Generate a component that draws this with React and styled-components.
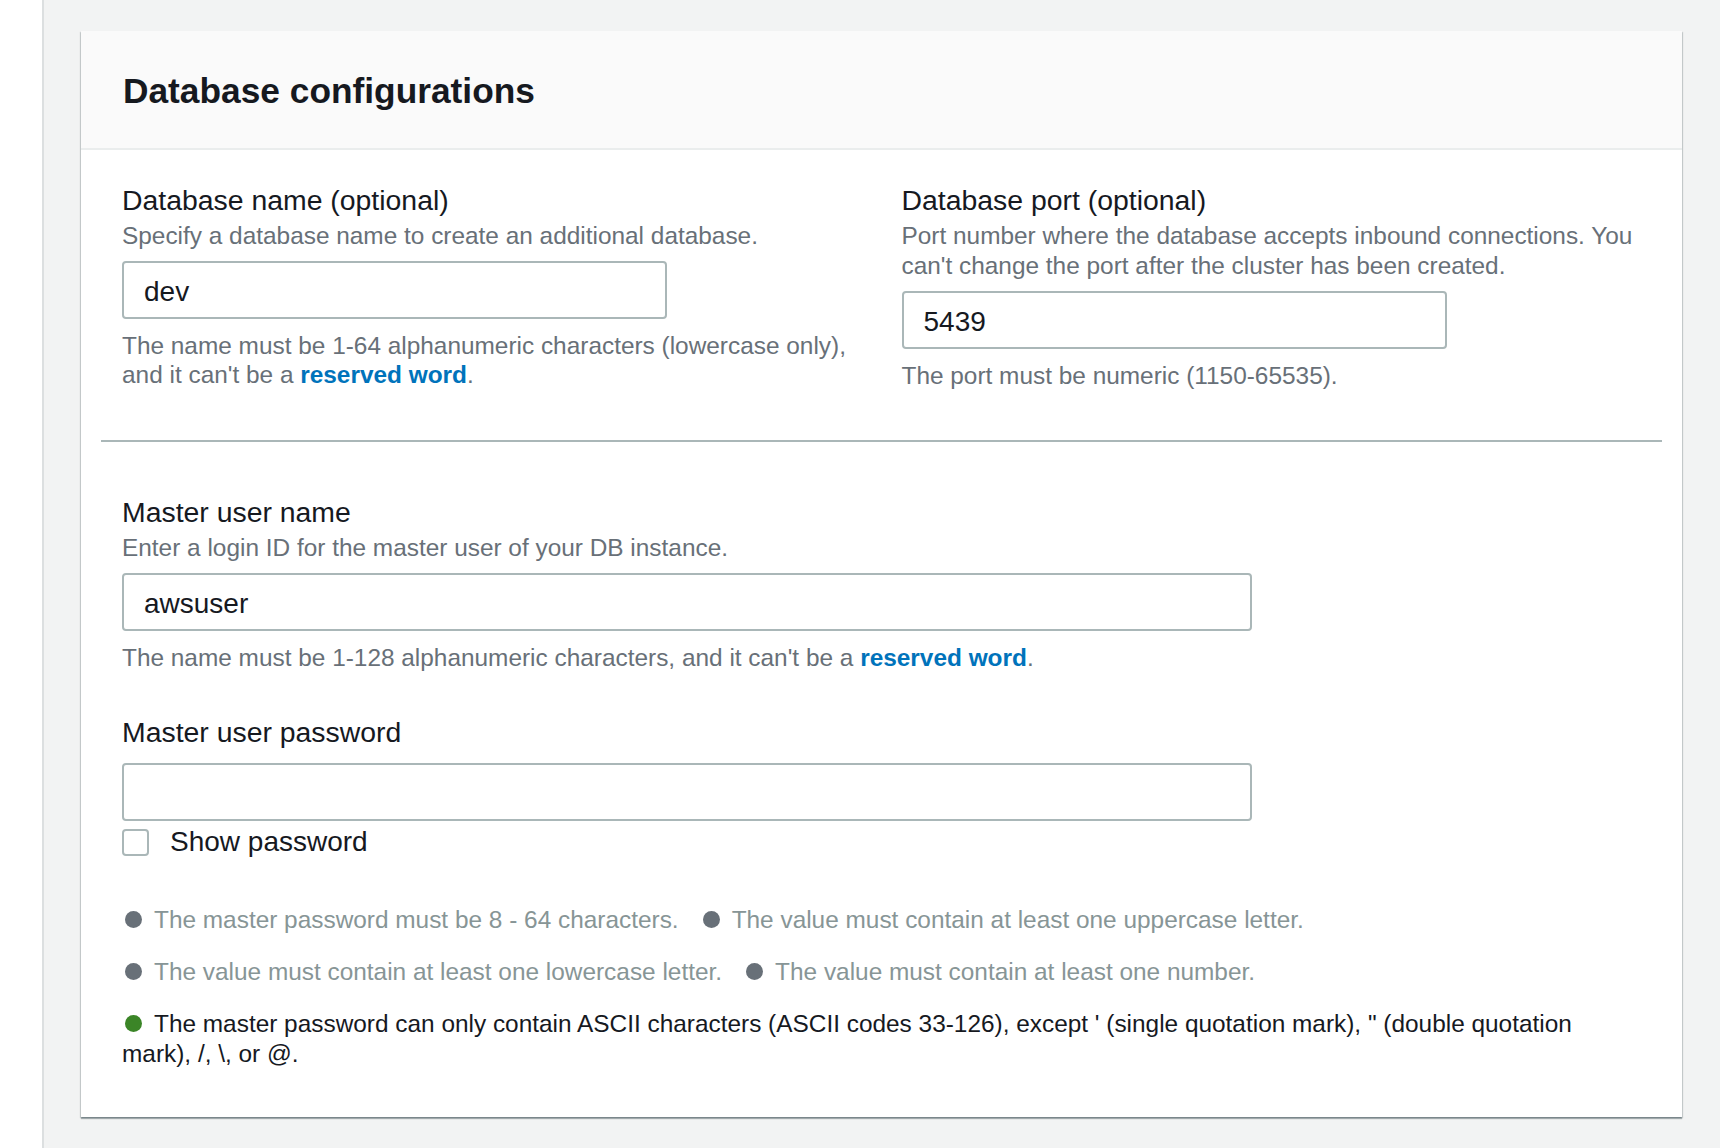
import React from "react";
import styled, { createGlobalStyle } from "styled-components";

const GlobalStyle = createGlobalStyle`
  html, body {
    margin: 0;
    padding: 0;
    background: #f2f3f3;
  }
  body {
    font-family: "Liberation Sans", Arial, sans-serif;
    color: #16191f;
  }
  * { box-sizing: border-box; }
`;

const Page = styled.div`
  display: flex;
  min-height: 100vh;
`;

const SideRail = styled.aside`
  flex: none;
  width: 44px;
  background: #ffffff;
  border-right: 2px solid #dcdfe0;
`;

const Main = styled.main`
  flex: 1;
  padding: 31px 38px 30px 37px;
`;

const Card = styled.section`
  background: #ffffff;
  box-shadow: 0 2px 1px 0 rgba(0, 28, 36, 0.3), 1px 1px 1px 0 rgba(0, 28, 36, 0.15),
    -1px 1px 1px 0 rgba(0, 28, 36, 0.15);
`;

const CardHeader = styled.header`
  background: #fafafa;
  border-bottom: 2px solid #eaeded;
  padding: 40px 42px 37px;
`;

const Title = styled.h2`
  margin: 0;
  font-size: 35.3px;
  line-height: 40px;
  font-weight: 700;
  color: #16191f;
`;

const CardBody = styled.div`
  padding: 0 20px;
`;

const Section = styled.div`
  padding: ${(p) => p.$pad};
`;

const Divider = styled.div`
  height: 2px;
  background: #aab7b8;
`;

const Columns = styled.div`
  display: grid;
  grid-template-columns: 1fr 1fr;
  column-gap: 40px;
`;

const Field = styled.div`
  display: flex;
  flex-direction: column;
  align-items: flex-start;
  margin-top: ${(p) => p.$top || 0}px;
`;

const Label = styled.label`
  font-size: 28.4px;
  line-height: 34px;
  color: #16191f;
`;

const Description = styled.div`
  margin-top: 4px;
  font-size: 24.4px;
  line-height: 30px;
  color: #687078;
`;

const TextInput = styled.input`
  width: ${(p) => p.$width}px;
  height: 58px;
  margin-top: ${(p) => p.$top}px;
  padding: 3px 20px 0;
  border: 2px solid #aab7b8;
  border-radius: 4px;
  background: #ffffff;
  font-family: "Liberation Sans", Arial, sans-serif;
  font-size: 28px;
  color: #16191f;
  outline: none;
`;

const Helper = styled.div`
  margin-top: 12px;
  font-size: 24.4px;
  line-height: 29px;
  color: #687078;
`;

const Link = styled.a`
  color: #0073bb;
  font-weight: 700;
  text-decoration: none;
`;

const CheckRow = styled.label`
  display: flex;
  align-items: center;
  gap: 21px;
  margin-top: 4px;
`;

const CheckBox = styled.span`
  flex: none;
  width: 27px;
  height: 27px;
  border: 2px solid #aab7b8;
  border-radius: 4px;
  background: #ffffff;
`;

const CheckText = styled.span`
  font-size: 28px;
  line-height: 34px;
  color: #16191f;
`;

const RuleList = styled.ul`
  list-style: none;
  margin: 46px 0 0;
  padding: 0;
  max-width: 1480px;
  display: flex;
  flex-wrap: wrap;
  column-gap: 21px;
  row-gap: 22px;
`;

const Rule = styled.li`
  font-size: 24.4px;
  line-height: 30px;
  color: ${(p) => (p.$met ? "#16191f" : "#879596")};
`;

const Dot = styled.span`
  display: inline-block;
  width: 17px;
  height: 17px;
  border-radius: 50%;
  margin: 0 12px 0 3px;
  vertical-align: baseline;
  background: ${(p) => (p.$met ? "#3b8527" : "#687078")};
`;

const rules = [
  { text: "The master password must be 8 - 64 characters.", met: false },
  { text: "The value must contain at least one uppercase letter.", met: false },
  { text: "The value must contain at least one lowercase letter.", met: false },
  { text: "The value must contain at least one number.", met: false },
  {
    text:
      "The master password can only contain ASCII characters (ASCII codes 33-126), except ' (single quotation mark), \" (double quotation mark), /, \\, or @.",
    met: true,
  },
];

export default function App() {
  return (
    <>
      <GlobalStyle />
      <Page>
        <SideRail />
        <Main>
          <Card>
            <CardHeader>
              <Title>Database configurations</Title>
            </CardHeader>
            <CardBody>
              <Section $pad="33px 21px 50px">
                <Columns>
                  <Field>
                    <Label>Database name (optional)</Label>
                    <Description>Specify a database name to create an additional database.</Description>
                    <TextInput $width={545} $top={10} value="dev" readOnly />
                    <Helper>
                      The name must be 1-64 alphanumeric characters (lowercase only), and it can't be a{" "}
                      <Link href="#">reserved word</Link>.
                    </Helper>
                  </Field>
                  <Field>
                    <Label>Database port (optional)</Label>
                    <Description>
                      Port number where the database accepts inbound connections. You can't change the port
                      after the cluster has been created.
                    </Description>
                    <TextInput $width={545} $top={10} value="5439" readOnly />
                    <Helper>The port must be numeric (1150-65535).</Helper>
                  </Field>
                </Columns>
              </Section>
              <Divider />
              <Section $pad="53px 21px 48px">
                <Field>
                  <Label>Master user name</Label>
                  <Description>Enter a login ID for the master user of your DB instance.</Description>
                  <TextInput $width={1130} $top={10} value="awsuser" readOnly />
                  <Helper>
                    The name must be 1-128 alphanumeric characters, and it can't be a{" "}
                    <Link href="#">reserved word</Link>.
                  </Helper>
                </Field>
                <Field $top={43}>
                  <Label>Master user password</Label>
                  <TextInput $width={1130} $top={14} type="password" value="" readOnly />
                </Field>
                <CheckRow>
                  <CheckBox />
                  <CheckText>Show password</CheckText>
                </CheckRow>
                <RuleList>
                  {rules.map((r) => (
                    <Rule key={r.text} $met={r.met}>
                      <Dot $met={r.met} />
                      {r.text}
                    </Rule>
                  ))}
                </RuleList>
              </Section>
            </CardBody>
          </Card>
        </Main>
      </Page>
    </>
  );
}
